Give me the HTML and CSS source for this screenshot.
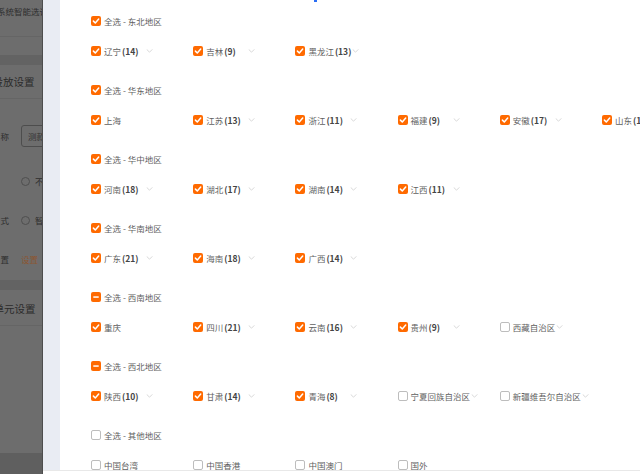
FILE: index.html
```html
<!DOCTYPE html>
<html lang="zh-CN">
<head>
<meta charset="utf-8">
<title>地域选择</title>
<link rel="stylesheet" href="styles.css">
</head>
<body>
<div class="screen">
  <div class="bg">
    <div class="bg-card bg-top">
      <div class="bg-line1"><span class="bg-text bg-t1">系统智能选词</span></div>
      <div class="bg-line2"></div>
    </div>
    <div class="bg-gap"></div>
    <div class="bg-card bg-mid">
      <div class="bg-title"><span class="bg-h bg-h1">投放设置</span></div>
      <div class="bg-form">
        <div class="bg-row bg-row-input"><span class="bg-lab">称</span><span class="bg-input">测款</span></div>
        <div class="bg-row bg-row-r1"><span class="bg-lab"></span><span class="bg-radio"></span><span class="bg-rtext">不</span></div>
        <div class="bg-row bg-row-r2"><span class="bg-lab">式</span><span class="bg-radio"></span><span class="bg-rtext">智</span></div>
        <div class="bg-row bg-row-r3"><span class="bg-lab">置</span><span class="bg-link">设置</span></div>
      </div>
    </div>
    <div class="bg-gap"></div>
    <div class="bg-card bg-low">
      <div class="bg-title2"><span class="bg-h bg-h2">单元设置</span></div>
    </div>
    <div class="bg-gap bg-gap-end"></div>
  </div>

  <div class="drawer">
    <div class="drawer-body">
      <div class="card">

        <div class="group">
          <div class="row head"><span class="cb on"><svg viewBox="0 0 10 10"><path d="M2.4 5.1 4.3 7 7.7 3.1"/></svg></span><span class="htext">全选 - 东北地区</span></div>
          <div class="row items">
            <div class="item"><span class="cb on"><svg viewBox="0 0 10 10"><path d="M2.4 5.1 4.3 7 7.7 3.1"/></svg></span><span class="label">辽宁<b>(14)</b></span><svg class="chev" viewBox="0 0 8 5"><path d="M0.5 0.5 4 4 7.5 0.5"/></svg></div>
            <div class="item"><span class="cb on"><svg viewBox="0 0 10 10"><path d="M2.4 5.1 4.3 7 7.7 3.1"/></svg></span><span class="label">吉林<b>(9)</b></span><svg class="chev" viewBox="0 0 8 5"><path d="M0.5 0.5 4 4 7.5 0.5"/></svg></div>
            <div class="item"><span class="cb on"><svg viewBox="0 0 10 10"><path d="M2.4 5.1 4.3 7 7.7 3.1"/></svg></span><span class="label">黑龙江<b>(13)</b></span><svg class="chev" viewBox="0 0 8 5"><path d="M0.5 0.5 4 4 7.5 0.5"/></svg></div>
          </div>
        </div>

        <div class="group">
          <div class="row head"><span class="cb on"><svg viewBox="0 0 10 10"><path d="M2.4 5.1 4.3 7 7.7 3.1"/></svg></span><span class="htext">全选 - 华东地区</span></div>
          <div class="row items">
            <div class="item"><span class="cb on"><svg viewBox="0 0 10 10"><path d="M2.4 5.1 4.3 7 7.7 3.1"/></svg></span><span class="label">上海</span></div>
            <div class="item"><span class="cb on"><svg viewBox="0 0 10 10"><path d="M2.4 5.1 4.3 7 7.7 3.1"/></svg></span><span class="label">江苏<b>(13)</b></span><svg class="chev" viewBox="0 0 8 5"><path d="M0.5 0.5 4 4 7.5 0.5"/></svg></div>
            <div class="item"><span class="cb on"><svg viewBox="0 0 10 10"><path d="M2.4 5.1 4.3 7 7.7 3.1"/></svg></span><span class="label">浙江<b>(11)</b></span><svg class="chev" viewBox="0 0 8 5"><path d="M0.5 0.5 4 4 7.5 0.5"/></svg></div>
            <div class="item"><span class="cb on"><svg viewBox="0 0 10 10"><path d="M2.4 5.1 4.3 7 7.7 3.1"/></svg></span><span class="label">福建<b>(9)</b></span><svg class="chev" viewBox="0 0 8 5"><path d="M0.5 0.5 4 4 7.5 0.5"/></svg></div>
            <div class="item"><span class="cb on"><svg viewBox="0 0 10 10"><path d="M2.4 5.1 4.3 7 7.7 3.1"/></svg></span><span class="label">安徽<b>(17)</b></span><svg class="chev" viewBox="0 0 8 5"><path d="M0.5 0.5 4 4 7.5 0.5"/></svg></div>
            <div class="item"><span class="cb on"><svg viewBox="0 0 10 10"><path d="M2.4 5.1 4.3 7 7.7 3.1"/></svg></span><span class="label">山东<b>(17)</b></span><svg class="chev" viewBox="0 0 8 5"><path d="M0.5 0.5 4 4 7.5 0.5"/></svg></div>
          </div>
        </div>

        <div class="group">
          <div class="row head"><span class="cb on"><svg viewBox="0 0 10 10"><path d="M2.4 5.1 4.3 7 7.7 3.1"/></svg></span><span class="htext">全选 - 华中地区</span></div>
          <div class="row items">
            <div class="item"><span class="cb on"><svg viewBox="0 0 10 10"><path d="M2.4 5.1 4.3 7 7.7 3.1"/></svg></span><span class="label">河南<b>(18)</b></span><svg class="chev" viewBox="0 0 8 5"><path d="M0.5 0.5 4 4 7.5 0.5"/></svg></div>
            <div class="item"><span class="cb on"><svg viewBox="0 0 10 10"><path d="M2.4 5.1 4.3 7 7.7 3.1"/></svg></span><span class="label">湖北<b>(17)</b></span><svg class="chev" viewBox="0 0 8 5"><path d="M0.5 0.5 4 4 7.5 0.5"/></svg></div>
            <div class="item"><span class="cb on"><svg viewBox="0 0 10 10"><path d="M2.4 5.1 4.3 7 7.7 3.1"/></svg></span><span class="label">湖南<b>(14)</b></span><svg class="chev" viewBox="0 0 8 5"><path d="M0.5 0.5 4 4 7.5 0.5"/></svg></div>
            <div class="item"><span class="cb on"><svg viewBox="0 0 10 10"><path d="M2.4 5.1 4.3 7 7.7 3.1"/></svg></span><span class="label">江西<b>(11)</b></span><svg class="chev" viewBox="0 0 8 5"><path d="M0.5 0.5 4 4 7.5 0.5"/></svg></div>
          </div>
        </div>

        <div class="group">
          <div class="row head"><span class="cb on"><svg viewBox="0 0 10 10"><path d="M2.4 5.1 4.3 7 7.7 3.1"/></svg></span><span class="htext">全选 - 华南地区</span></div>
          <div class="row items">
            <div class="item"><span class="cb on"><svg viewBox="0 0 10 10"><path d="M2.4 5.1 4.3 7 7.7 3.1"/></svg></span><span class="label">广东<b>(21)</b></span><svg class="chev" viewBox="0 0 8 5"><path d="M0.5 0.5 4 4 7.5 0.5"/></svg></div>
            <div class="item"><span class="cb on"><svg viewBox="0 0 10 10"><path d="M2.4 5.1 4.3 7 7.7 3.1"/></svg></span><span class="label">海南<b>(18)</b></span><svg class="chev" viewBox="0 0 8 5"><path d="M0.5 0.5 4 4 7.5 0.5"/></svg></div>
            <div class="item"><span class="cb on"><svg viewBox="0 0 10 10"><path d="M2.4 5.1 4.3 7 7.7 3.1"/></svg></span><span class="label">广西<b>(14)</b></span><svg class="chev" viewBox="0 0 8 5"><path d="M0.5 0.5 4 4 7.5 0.5"/></svg></div>
          </div>
        </div>

        <div class="group">
          <div class="row head"><span class="cb on"><svg viewBox="0 0 10 10"><rect class="bar" x="2.3" y="4.3" width="5.4" height="1.5"/></svg></span><span class="htext">全选 - 西南地区</span></div>
          <div class="row items">
            <div class="item"><span class="cb on"><svg viewBox="0 0 10 10"><path d="M2.4 5.1 4.3 7 7.7 3.1"/></svg></span><span class="label">重庆</span></div>
            <div class="item"><span class="cb on"><svg viewBox="0 0 10 10"><path d="M2.4 5.1 4.3 7 7.7 3.1"/></svg></span><span class="label">四川<b>(21)</b></span><svg class="chev" viewBox="0 0 8 5"><path d="M0.5 0.5 4 4 7.5 0.5"/></svg></div>
            <div class="item"><span class="cb on"><svg viewBox="0 0 10 10"><path d="M2.4 5.1 4.3 7 7.7 3.1"/></svg></span><span class="label">云南<b>(16)</b></span><svg class="chev" viewBox="0 0 8 5"><path d="M0.5 0.5 4 4 7.5 0.5"/></svg></div>
            <div class="item"><span class="cb on"><svg viewBox="0 0 10 10"><path d="M2.4 5.1 4.3 7 7.7 3.1"/></svg></span><span class="label">贵州<b>(9)</b></span><svg class="chev" viewBox="0 0 8 5"><path d="M0.5 0.5 4 4 7.5 0.5"/></svg></div>
            <div class="item"><span class="cb off"></span><span class="label">西藏自治区</span><svg class="chev" viewBox="0 0 8 5"><path d="M0.5 0.5 4 4 7.5 0.5"/></svg></div>
          </div>
        </div>

        <div class="group">
          <div class="row head"><span class="cb on"><svg viewBox="0 0 10 10"><rect class="bar" x="2.3" y="4.3" width="5.4" height="1.5"/></svg></span><span class="htext">全选 - 西北地区</span></div>
          <div class="row items">
            <div class="item"><span class="cb on"><svg viewBox="0 0 10 10"><path d="M2.4 5.1 4.3 7 7.7 3.1"/></svg></span><span class="label">陕西<b>(10)</b></span><svg class="chev" viewBox="0 0 8 5"><path d="M0.5 0.5 4 4 7.5 0.5"/></svg></div>
            <div class="item"><span class="cb on"><svg viewBox="0 0 10 10"><path d="M2.4 5.1 4.3 7 7.7 3.1"/></svg></span><span class="label">甘肃<b>(14)</b></span><svg class="chev" viewBox="0 0 8 5"><path d="M0.5 0.5 4 4 7.5 0.5"/></svg></div>
            <div class="item"><span class="cb on"><svg viewBox="0 0 10 10"><path d="M2.4 5.1 4.3 7 7.7 3.1"/></svg></span><span class="label">青海<b>(8)</b></span><svg class="chev" viewBox="0 0 8 5"><path d="M0.5 0.5 4 4 7.5 0.5"/></svg></div>
            <div class="item"><span class="cb off"></span><span class="label">宁夏回族自治区</span><svg class="chev" viewBox="0 0 8 5"><path d="M0.5 0.5 4 4 7.5 0.5"/></svg></div>
            <div class="item"><span class="cb off"></span><span class="label">新疆维吾尔自治区</span><svg class="chev" viewBox="0 0 8 5"><path d="M0.5 0.5 4 4 7.5 0.5"/></svg></div>
          </div>
        </div>

        <div class="group">
          <div class="row head"><span class="cb off"></span><span class="htext">全选 - 其他地区</span></div>
          <div class="row items">
            <div class="item"><span class="cb off"></span><span class="label">中国台湾</span></div>
            <div class="item"><span class="cb off"></span><span class="label">中国香港</span></div>
            <div class="item"><span class="cb off"></span><span class="label">中国澳门</span></div>
            <div class="item"><span class="cb off"></span><span class="label">国外</span></div>
          </div>
        </div>

      </div>
    </div>
    <div class="footer"></div>
  </div>

  <span class="focus-dot"></span>
</div>
</body>
</html>
```

FILE: styles.css
```css
html, body {
  margin: 0;
  padding: 0;
}

body {
  width: 640px;
  height: 474px;
  overflow: hidden;
  font-family: "Noto Sans CJK SC", "Noto Sans", sans-serif;
  background: #6b6b6b;
}

.screen {
  position: relative;
  display: flex;
  width: 640px;
  height: 474px;
}

/* ---------- dimmed page behind the drawer ---------- */
.bg {
  width: 42px;
  flex: none;
  overflow: hidden;
  background: #636363;
  color: #2c2c2c;
}

.bg-card {
  background: #6d6d6d;
}

.bg-top {
  height: 55px;
}

.bg-line1 {
  height: 37px;
  border-bottom: 1px solid #656565;
  box-sizing: border-box;
  padding-top: 5px;
}

.bg-text {
  display: block;
  font-size: 8.5px;
  line-height: 12px;
  white-space: nowrap;
  margin-left: -3px;
  color: #2e2e2e;
}

.bg-gap {
  height: 10px;
  background: #636363;
}

.bg-mid {
  height: 215px;
}

.bg-title {
  height: 33px;
  border-bottom: 1px solid #656565;
  display: flex;
  align-items: center;
}

.bg-h {
  display: block;
  font-size: 10.5px;
  line-height: 14px;
  white-space: nowrap;
  color: #2b2b2b;
}

.bg-h1 {
  margin-left: -7.5px;
  margin-top: 1px;
}

.bg-form {
  display: flex;
  flex-direction: column;
}

.bg-row {
  display: flex;
  align-items: center;
  white-space: nowrap;
  font-size: 8.5px;
  color: #2e2e2e;
}

.bg-lab {
  width: 9px;
  flex: none;
  text-align: right;
  overflow: visible;
  margin-right: 12px;
}

.bg-row-input {
  margin-top: 26px;
  height: 22px;
}

.bg-input {
  width: 80px;
  height: 22px;
  flex: none;
  box-sizing: border-box;
  border: 1px solid #4d4d4d;
  border-radius: 3px;
  padding-left: 6px;
  line-height: 20px;
  color: #333;
}

.bg-row-r1 {
  margin-top: 29px;
  height: 10px;
}

.bg-row-r2 {
  margin-top: 29px;
  height: 10px;
}

.bg-row-r3 {
  margin-top: 28px;
  height: 12px;
}

.bg-radio {
  width: 9px;
  height: 9px;
  flex: none;
  box-sizing: border-box;
  border: 1px solid #4f4f4f;
  border-radius: 50%;
  margin-right: 5px;
}

.bg-rtext {
  color: #2e2e2e;
}

.bg-link {
  color: #8c5632;
}

.bg-low {
  height: 163px;
}

.bg-title2 {
  height: 35px;
  border-bottom: 1px solid #656565;
  display: flex;
  align-items: center;
}

.bg-h2 {
  margin-left: -6.5px;
  margin-top: 2px;
}

.bg-gap-end {
  height: 21px;
  background: #5f5f5f;
}

/* ---------- drawer ---------- */
.drawer {
  flex: 1;
  min-width: 0;
  display: flex;
  flex-direction: column;
  border-left: 1px solid #4d4d4d;
  background: #e9ecf3;
}

.drawer-body {
  flex: 1;
  min-height: 0;
  display: flex;
  padding-left: 17px;
}

.card {
  flex: 1;
  min-width: 0;
  background: #ffffff;
  overflow: hidden;
  padding: 13.2px 0 0 31px;
}

.footer {
  height: 3px;
  flex: none;
  background: #ffffff;
  border-top: 1px solid #e8e8e8;
}

/* ---------- region groups ---------- */
.group {
  margin-bottom: 23.5px;
}

.row {
  display: flex;
  align-items: center;
  height: 16px;
  flex-wrap: nowrap;
}

.items {
  margin-top: 13.5px;
}

.item {
  width: 102.2px;
  flex: none;
  display: flex;
  align-items: center;
}

.cb {
  width: 10px;
  height: 10px;
  flex: none;
  box-sizing: border-box;
  border-radius: 2px;
  display: block;
}

.cb svg {
  display: block;
  width: 10px;
  height: 10px;
}

.cb path {
  fill: none;
  stroke: #ffffff;
  stroke-width: 1.5;
  stroke-linecap: round;
  stroke-linejoin: round;
}

.cb .bar {
  fill: #ffffff;
}

.cb.on {
  background: #ff6a00;
}

.cb.off {
  background: #ffffff;
  border: 1px solid #bdbdbd;
}

.htext {
  margin-left: 3px;
  font-size: 8.5px;
  line-height: 16px;
  color: #5f5f5f;
  white-space: nowrap;
}

.label {
  margin-left: 3px;
  min-width: 41px;
  font-size: 8.5px;
  line-height: 16px;
  color: #5f5f5f;
  white-space: nowrap;
}

.label b {
  font-weight: 700;
  color: #444444;
  margin-left: 1px;
}

.chev {
  width: 7px;
  height: 4px;
  flex: none;
  margin-left: 1px;
}

.chev path {
  fill: none;
  stroke: #c8c8c8;
  stroke-width: 0.9;
}

/* small focus marker at the top edge */
.focus-dot {
  position: absolute;
  left: 314px;
  top: 0;
  width: 3px;
  height: 2px;
  background: #2a6df4;
}
```
